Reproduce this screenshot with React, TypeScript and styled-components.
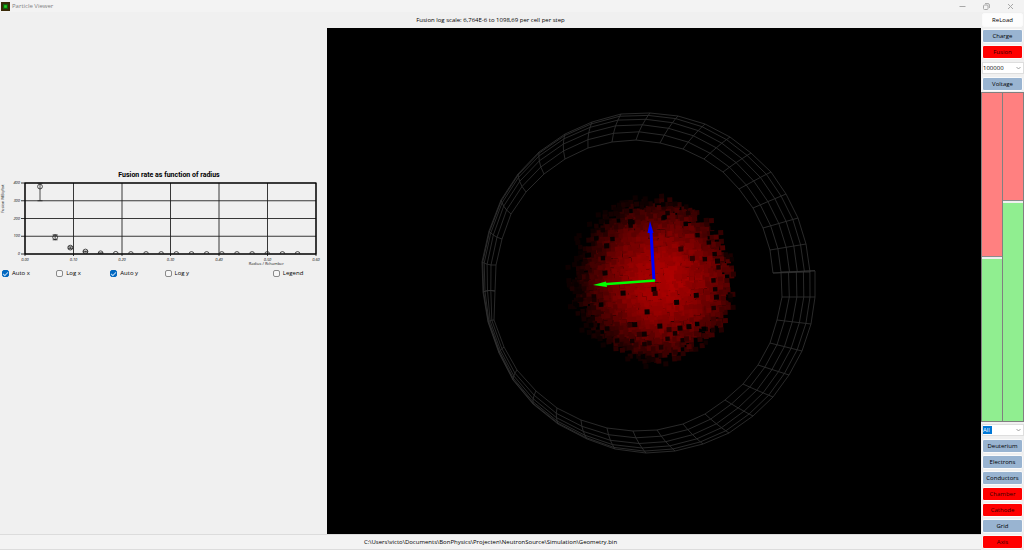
import React, { useState } from "react";
import styled, { createGlobalStyle } from "styled-components";

const GlobalStyle = createGlobalStyle`
  * { box-sizing: border-box; }
  body {
    margin: 0;
    background: #f0f0f0;
    color: #000;
    font: 6px/8px "Open Sans", "Noto Sans", sans-serif;
  }
  button, select, input { font: inherit; color: inherit; margin: 0; padding: 0; }
`;

const Window = styled.div`
  display: flex;
  flex-direction: column;
  min-height: 100vh;
`;

const TitleBar = styled.header`
  display: flex;
  align-items: center;
  height: 12px;
  padding: 0 8px 0 1px;
  background: #f3f3f3;
  color: #808080;
`;

const AppIcon = styled.svg`
  width: 9px;
  height: 9px;
  margin-right: 2px;
`;

const AppTitle = styled.h1`
  flex: 1;
  margin: 0;
  font-size: 6px;
  font-weight: 400;
`;

const CaptionButtons = styled.div`
  display: flex;
  gap: 12px;
`;

const CaptionButton = styled.button`
  display: flex;
  align-items: center;
  justify-content: center;
  width: 12px;
  height: 11px;
  border: 0;
  background: none;

  svg {
    width: 7px;
    height: 7px;
    fill: none;
    stroke: #a8a8a8;
  }
`;

const Body = styled.div`
  display: flex;
  flex: 1;
`;

const Workspace = styled.main`
  display: flex;
  flex: 1;
  flex-direction: column;
  min-width: 0;
`;

const Caption = styled.p`
  margin: 0;
  height: 16px;
  line-height: 16px;
  text-align: center;
`;

const Split = styled.div`
  display: grid;
  grid-template-columns: 1fr 2fr;
  flex: 1;
`;

const ChartPane = styled.section`
  padding-top: 140px;
`;

const ChartSvg = styled.svg`
  display: block;
  width: 100%;

  text {
    font-size: 4px;
    fill: #1a1a1a;
  }
  .title {
    font-family: Roboto, sans-serif;
    font-size: 7px;
    font-weight: 700;
    fill: #000;
  }
  .tick {
    font-style: italic;
  }
`;

const OptionRow = styled.div`
  display: grid;
  grid-template-columns: repeat(6, 1fr);
  padding-left: 2px;
`;

const Option = styled.label<{ $last?: boolean }>`
  display: flex;
  align-items: center;
  gap: 3px;
  height: 10px;
  white-space: nowrap;
  ${(p) => p.$last && "grid-column: 6;"}
`;

const Tick = styled.input`
  appearance: none;
  display: flex;
  align-items: center;
  justify-content: center;
  width: 7px;
  height: 7px;
  border: 1px solid #8a8a8a;
  border-radius: 2px;
  background: #f6f6f6;

  &:checked {
    border-color: #0067c0;
    background: #0067c0;
  }
  &:checked::after {
    content: "";
    width: 4px;
    height: 2px;
    border: solid #b8d8f4;
    border-width: 0 0 1px 1px;
    transform: rotate(-45deg);
  }
`;

const Viewport = styled.section`
  position: relative;
  background: #000;

  svg {
    display: block;
    width: 100%;
    height: 100%;
  }
`;

const StatusBar = styled.footer`
  height: 16px;
  padding-bottom: 1px;
  border-top: 1px solid #dcdcdc;
  border-bottom: 1px solid #dcdcdc;
  background: #f3f3f3;
  line-height: 14px;
  text-align: center;
`;

const Sidebar = styled.aside`
  display: flex;
  flex-direction: column;
  width: 43px;
`;

const tones = { plain: "#fdfdfd", blue: "#99b4d1", red: "#ff0000" };

const SideButton = styled.button<{ $tone: keyof typeof tones }>`
  display: flex;
  align-items: center;
  justify-content: center;
  height: 14px;
  margin: 1px;
  border: 1px solid #fbfbfb;
  border-radius: 2px;
  background: ${(p) => tones[p.$tone]};
  color: ${(p) => (p.$tone === "red" ? "#300000" : "#000")};
  line-height: 12px;
  white-space: nowrap;
`;

const Combo = styled.div`
  display: grid;
  align-items: center;
  height: 12px;
  margin: 2px 0 2px 1px;
  border: 1px solid #dedede;
  background: #fff;

  > * { grid-area: 1 / 1; }
  svg {
    justify-self: end;
    width: 5px;
    height: 4px;
    margin-right: 2px;
    fill: none;
    stroke: #8a8a8a;
    pointer-events: none;
  }
`;

const ComboSelect = styled.select<{ $highlight?: boolean }>`
  appearance: none;
  width: 100%;
  height: 10px;
  border: 0;
  border-radius: 0;
  line-height: 10px;
  color: ${(p) => (p.$highlight ? "#fff" : "#000")};
  background: ${(p) =>
    p.$highlight
      ? "linear-gradient(#0078d7, #0078d7) 0 1px / 9px 8px no-repeat #fff"
      : "#fff"};
`;

const Levels = styled.div`
  display: grid;
  grid-template-columns: 1fr 1fr;
  gap: 1px;
  flex: 1;
  min-height: 120px;
  padding: 1px;
  background: #808080;
`;

const Level = styled.input`
  appearance: none;
  writing-mode: vertical-lr;
  direction: rtl;
  width: 100%;
  height: 100%;
  border-radius: 0;
  outline: 0;

  &::-webkit-slider-runnable-track {
    width: 100%;
    height: 100%;
  }
  &::-webkit-slider-thumb {
    appearance: none;
    width: 100%;
    height: 3px;
    border: solid #8c8c8c;
    border-width: 1px 0 0;
    background: #f0f0f0;
  }
`;

function VoltageLevel({ label, start }: { label: string; start: number }) {
  const [value, setValue] = useState(start);
  const split = `${100 - value / 10}%`;
  return (
    <Level
      type="range"
      aria-label={label}
      min={0}
      max={1000}
      value={value}
      onChange={(e) => setValue(Number(e.target.value))}
      style={{ background: `linear-gradient(#ff8080 ${split}, #90ee90 ${split})` }}
    />
  );
}

function ComboBox({ label, options, highlight }: { label: string; options: string[]; highlight?: boolean }) {
  return (
    <Combo>
      <ComboSelect aria-label={label} $highlight={highlight}>
        {options.map((o) => (
          <option key={o}>{o}</option>
        ))}
      </ComboSelect>
      <svg viewBox="0 0 5 4">
        <path d="M0.5 1L2.5 3L4.5 1" strokeWidth="0.8" />
      </svg>
    </Combo>
  );
}

/* ---- Fusion rate chart ---- */

const PLOT = { left: 25, right: 316, top: 15, bottom: 86 };
const xTicks = ["0,00", "0,10", "0,20", "0,30", "0,40", "0,50", "0,60"];
const yTicks = ["0", "100", "200", "300", "400"];
const rates = [380, 94, 36, 14, 4, 1, 0, 0, 0, 0, 0, 0, 0, 0, 0, 0, 0, 0];
const errors: [number, number][] = [[300, 398], [80, 108], [30, 40], [11, 16], [3, 6]];

const px = (i: number) => PLOT.left + (i * (PLOT.right - PLOT.left)) / 6;
const py = (v: number) => PLOT.bottom - (v * (PLOT.bottom - PLOT.top)) / 400;

function RateChart() {
  return (
    <ChartSvg viewBox="0 0 327 100" role="img" aria-label="Fusion rate as function of radius">
      <clipPath id="plot">
        <rect x={PLOT.left} y={PLOT.top - 3} width={PLOT.right - PLOT.left} height={PLOT.bottom - PLOT.top + 3} />
      </clipPath>
      <text className="title" x="169" y="9" textAnchor="middle">
        Fusion rate as function of radius
      </text>
      {xTicks.map((t, i) => (
        <g key={t}>
          <path d={`M${px(i)} ${PLOT.top}V${PLOT.bottom + 2}`} stroke="#222" strokeWidth="0.9" />
          <text className="tick" x={px(i)} y="93" textAnchor="middle">{t}</text>
        </g>
      ))}
      {yTicks.map((t, i) => (
        <g key={t}>
          <path d={`M${PLOT.left - 4} ${py(i * 100)}H${PLOT.right}`} stroke="#222" strokeWidth="0.9" />
          <text className="tick" x="20" y={py(i * 100) + 1} textAnchor="end">{t}</text>
        </g>
      ))}
      <rect
        x={PLOT.left}
        y={PLOT.top}
        width={PLOT.right - PLOT.left}
        height={PLOT.bottom - PLOT.top}
        fill="none"
        stroke="#000"
        strokeWidth="1.2"
      />
      <g clipPath="url(#plot)" fill="none" stroke="#222" strokeWidth="0.8">
        {rates.map((r, i) => (
          <circle key={i} cx={40 + i * 15.15} cy={py(r)} r="2.4" />
        ))}
        {errors.map(([lo, hi], i) => {
          const x = 40 + i * 15.15;
          return <path key={i} d={`M${x - 2.5} ${py(lo)}h5M${x - 2.5} ${py(hi)}h5M${x} ${py(lo)}V${py(hi)}`} />;
        })}
      </g>
      <text x="284" y="97" textAnchor="end">Radius / Rchamber</text>
      <text transform="translate(4 45) rotate(-90)">Fusion MBq/tot</text>
    </ChartSvg>
  );
}

/* ---- 3D scene: chamber wire frame, fusion cloud, axes ---- */

type Pt = [number, number];
type Rib = { outer: Pt; inner: Pt };
const rib = (ox: number, oy: number, ix: number, iy: number): Rib => ({ outer: [ox, oy], inner: [ix, iy] });

const upperRibs: Rib[] = [
  rib(483, 292, 495, 291), rib(482, 262, 496, 265), rib(489, 231, 502, 239), rib(501, 200, 511, 214),
  rib(518, 174, 526, 192), rib(539, 152, 544, 174), rib(565, 134, 565, 159), rib(592, 122, 588, 148),
  rib(621, 114, 612, 142), rib(650, 113, 636, 140), rib(678, 116, 660, 143), rib(705, 124, 683, 149),
  rib(730, 137, 704, 159), rib(751, 153, 723, 172), rib(771, 172, 739, 189), rib(786, 194, 753, 208),
  rib(798, 218, 763, 228), rib(806, 244, 770, 250), rib(810, 272, 773, 273),
];

const lowerRibs: Rib[] = [
  rib(815, 271, 781, 272), rib(815, 297, 782, 297), rib(811, 324, 777, 320), rib(802, 351, 770, 343),
  rib(789, 375, 758, 365), rib(773, 397, 743, 384), rib(753, 416, 725, 400), rib(729, 433, 705, 414),
  rib(703, 444, 683, 424), rib(675, 451, 657, 430), rib(646, 453, 633, 431), rib(615, 449, 607, 428),
  rib(587, 439, 581, 420), rib(558, 424, 557, 408), rib(533, 404, 536, 391), rib(513, 380, 517, 370),
  rib(499, 353, 504, 347), rib(488, 322, 494, 320), rib(483, 292, 495, 291),
];

/* Ring spacing: even where the wall faces the viewer, bunched to the outside where it turns away. */
const ringsNear = [0, 0.22, 0.45, 0.66, 0.85, 1];
const ringsFar = [0, 0.34, 0.62, 0.83, 0.95, 1];

function ribPoint({ outer, inner }: Rib, ring: number): Pt {
  const far = Math.min(1, Math.max(0, (790 - outer[0]) / 260));
  const t = ringsNear[ring] * (1 - far) + ringsFar[ring] * far;
  const dx = outer[0] - inner[0];
  const dy = outer[1] - inner[1];
  const side = outer[1] < 283 ? 1 : -1;
  const bow = 4 * t * (1 - t) * far * 0.08 * side;
  return [inner[0] + dx * t + dy * bow, inner[1] + dy * t - dx * bow];
}

const toPath = (pts: Pt[]) => "M" + pts.map(([x, y]) => `${x.toFixed(1)} ${y.toFixed(1)}`).join("L");

function framePath(ribs: Rib[]) {
  const rings = ringsNear.map((_, k) => toPath(ribs.map((r) => ribPoint(r, k))));
  const spokes = ribs.map((r) => toPath(ringsNear.map((_, k) => ribPoint(r, k))));
  return rings.concat(spokes).join("");
}

const framePaths = [framePath(upperRibs), framePath(lowerRibs)];

function randomSource(seed: number) {
  let s = seed;
  return () => {
    s = (s * 1664525 + 1013904223) % 4294967296;
    return s / 4294967296;
  };
}

type Cell = { x: number; y: number; w: number; h: number; level: number };

function makeCloud(): Cell[] {
  const rand = randomSource(7);
  const cells: Cell[] = [];
  for (let layer = 0; layer < 2; layer++) {
    for (let j = -20; j <= 20; j++) {
      for (let i = -20; i <= 20; i++) {
        const x = i * 4.4 + layer * 1.8 + (rand() - 0.5);
        const y = j * 4.4 + layer * 2.1 + (rand() - 0.5);
        const d = Math.hypot(x, y) / 86;
        const chance = rand();
        const shade = rand();
        const keep = d < 0.78 ? 1 : 1 - (d - 0.78) / 0.24;
        if (chance > keep * (layer ? 0.5 : 1)) continue;
        const glow = Math.hypot(x - 10, y - 1) / 86;
        const level = Math.max(14, 170 * (1 - Math.pow(glow, 1.8) * 0.92) + (shade - 0.5) * (10 + d * 30));
        cells.push({ x: 650 + x, y: 278 + y, w: 5, h: 5, level: Math.round(level) });
      }
    }
  }
  for (let k = 0; k < 70; k++) {
    const a = rand() * Math.PI * 2;
    const r = (0.66 + rand() * 0.34) * 82;
    cells.push({ x: 651 + Math.cos(a) * r, y: 279 + Math.sin(a) * r, w: 4.4, h: 4.4, level: Math.round(rand() * 30) });
  }
  const voids: Pt[] = [
    [633, 220], [608, 243], [693, 260], [695, 297], [715, 300], [682, 250], [622, 291], [653, 289],
    [654, 293], [675, 303], [645, 311], [636, 333], [641, 333], [657, 326], [666, 330], [677, 329],
    [686, 328], [683, 340], [718, 264], [605, 270], [613, 330], [628, 323], [632, 323], [627, 323],
  ];
  voids.forEach(([x, y], i) => cells.push({ x: x - 2, y: y - 2, w: 5, h: 5, level: i % 3 === 2 ? 50 : 12 }));
  return cells;
}

const cloud = makeCloud();

function Scene() {
  return (
    <svg viewBox="327 28 654 506" role="img" aria-label="Reaction chamber">
      <g fill="none" stroke="#333" strokeWidth="0.8">
        {framePaths.map((d, i) => (
          <path key={i} d={d} />
        ))}
        <path d="M773 273L815 270.5" />
      </g>
      <g transform="rotate(-3 653 281)">
        {cloud.map((c, i) => (
          <rect key={i} x={c.x} y={c.y} width={c.w} height={c.h} fill={`rgb(${c.level},0,0)`} />
        ))}
      </g>
      <path d="M654 281L651 232" stroke="#00f" strokeWidth="3" />
      <path d="M650 221L647.5 233L653.5 233Z" fill="#00f" />
      <path d="M655 280.5L604 284.3" stroke="#0f0" strokeWidth="2.6" />
      <path d="M593 285L606 281.5L607 287Z" fill="#0f0" />
    </svg>
  );
}

export default function App() {
  return (
    <>
      <GlobalStyle />
      <Window>
        <TitleBar>
          <AppIcon viewBox="0 0 9 9">
            <rect width="9" height="9" fill="#3a2a08" />
            <rect x="2" y="2" width="5" height="5" fill="#126010" />
            <rect x="3.2" y="3.2" width="2.6" height="2.6" fill="#28d020" />
          </AppIcon>
          <AppTitle>Particle Viewer</AppTitle>
          <CaptionButtons>
            <CaptionButton aria-label="Minimize">
              <svg viewBox="0 0 7 7"><path d="M0.5 3.5H6.5" /></svg>
            </CaptionButton>
            <CaptionButton aria-label="Restore">
              <svg viewBox="0 0 7 7">
                <rect x="0.5" y="2" width="4.5" height="4.5" rx="1" />
                <path d="M2 0.6H5Q6.4 0.6 6.4 2V5" />
              </svg>
            </CaptionButton>
            <CaptionButton aria-label="Close">
              <svg viewBox="0 0 7 7"><path d="M1 1L6 6M6 1L1 6" /></svg>
            </CaptionButton>
          </CaptionButtons>
        </TitleBar>
        <Body>
          <Workspace>
            <Caption>Fusion log scale: 6,764E-6 to 1098,69 per cell per step</Caption>
            <Split>
              <ChartPane>
                <RateChart />
                <OptionRow>
                  <Option><Tick type="checkbox" defaultChecked />Auto x</Option>
                  <Option><Tick type="checkbox" />Log x</Option>
                  <Option><Tick type="checkbox" defaultChecked />Auto y</Option>
                  <Option><Tick type="checkbox" />Log y</Option>
                  <Option $last><Tick type="checkbox" />Legend</Option>
                </OptionRow>
              </ChartPane>
              <Viewport>
                <Scene />
              </Viewport>
            </Split>
            <StatusBar>C:\Users\victo\Documents\BonPhysics\Projecten\NeutronSource\Simulation\Geometry.bin</StatusBar>
          </Workspace>
          <Sidebar>
            <SideButton $tone="plain">ReLoad</SideButton>
            <SideButton $tone="blue">Charge</SideButton>
            <SideButton $tone="red">Fusion</SideButton>
            <ComboBox label="Particle count" options={["100000"]} />
            <SideButton $tone="blue">Voltage</SideButton>
            <Levels>
              <VoltageLevel label="Lower level" start={498} />
              <VoltageLevel label="Upper level" start={670} />
            </Levels>
            <ComboBox label="Particles" options={["All"]} highlight />
            <SideButton $tone="blue">Deuterium</SideButton>
            <SideButton $tone="blue">Electrons</SideButton>
            <SideButton $tone="blue">Conductors</SideButton>
            <SideButton $tone="red">Chamber</SideButton>
            <SideButton $tone="red">Cathode</SideButton>
            <SideButton $tone="blue">Grid</SideButton>
            <SideButton $tone="red">Axis</SideButton>
          </Sidebar>
        </Body>
      </Window>
    </>
  );
}
